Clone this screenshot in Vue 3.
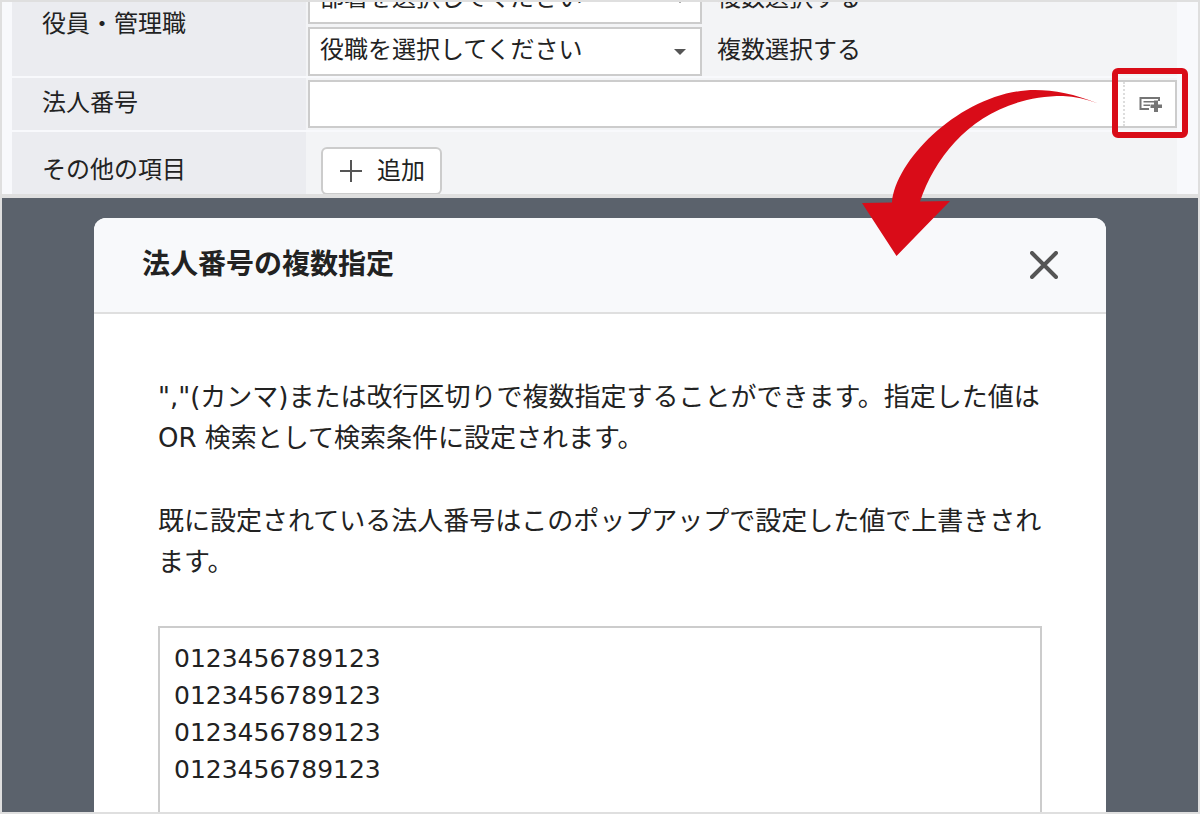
<script setup>
import { ref } from 'vue'

const department = ref('')
const position = ref('')
const corporateNumber = ref('')
const numbers = ref(Array(4).fill('0123456789123').join('\n'))
</script>

<template>
  <main class="frame">
    <form class="conditions" @submit.prevent>
      <div class="row">
        <label class="name" for="department">役員・管理職</label>
        <div class="value stack">
          <div class="line">
            <span class="picker">
              <select id="department" v-model="department">
                <option value="">部署を選択してください</option>
              </select>
              <svg class="caret" width="12" height="6" viewBox="0 0 12 6" aria-hidden="true"><path d="M0 0H12L6 6Z" /></svg>
            </span>
            <button type="button" class="multi">複数選択する</button>
          </div>
          <div class="line">
            <span class="picker">
              <select v-model="position" aria-label="役職">
                <option value="">役職を選択してください</option>
              </select>
              <svg class="caret" width="12" height="6" viewBox="0 0 12 6" aria-hidden="true"><path d="M0 0H12L6 6Z" /></svg>
            </span>
            <button type="button" class="multi">複数選択する</button>
          </div>
        </div>
      </div>

      <div class="row">
        <label class="name" for="corporate">法人番号</label>
        <div class="value single">
          <div class="combo">
            <input id="corporate" v-model="corporateNumber" type="text" />
            <button type="button" class="open" aria-label="法人番号の複数指定">
              <svg width="24" height="16" viewBox="0 0 24 16" aria-hidden="true">
                <path d="M10 13H1.500V2H20V5" fill="none" stroke="#757575" stroke-width="2" />
                <path d="M4.500 5.800H15.500M4.500 9.300H11" fill="none" stroke="#757575" stroke-width="1.6" />
                <path d="M15 4.500H19V8.500H23V12H19V16H15V12H11.500V8.500H15Z" fill="#757575" />
              </svg>
            </button>
          </div>
        </div>
      </div>

      <div class="row last">
        <label class="name" for="add">その他の項目</label>
        <div class="value extra">
          <button id="add" type="button" class="add">
            <svg width="24" height="24" viewBox="0 0 24 24" aria-hidden="true">
              <path d="M12 1V23M1 12H23" fill="none" stroke="#555" stroke-width="2" />
            </svg>
            <span>追加</span>
          </button>
        </div>
      </div>
    </form>

    <div class="overlay">
      <section class="dialog" role="dialog" aria-labelledby="dialog-title">
        <header class="head">
          <h2 id="dialog-title">法人番号の複数指定</h2>
          <button type="button" class="close" aria-label="閉じる">
            <svg width="28" height="28" viewBox="0 0 28 28" aria-hidden="true">
              <path d="M2 2L26 26M26 2L2 26" fill="none" stroke="#555" stroke-width="4" stroke-linecap="round" />
            </svg>
          </button>
        </header>
        <div class="body">
          <p>","(カンマ)または改行区切りで複数指定することができます。指定した値は<br />OR 検索として検索条件に設定されます。</p>
          <p>既に設定されている法人番号はこのポップアップで設定した値で上書きされます。</p>
          <textarea v-model="numbers" aria-label="法人番号" rows="8"></textarea>
        </div>
      </section>
    </div>

    <div class="highlight" aria-hidden="true"></div>
    <svg class="arrow" width="240" height="170" viewBox="860 88 240 170" aria-hidden="true">
      <path
        d="M1098 103.500C1075 94 1054 90 1035 90C966 90 896 157 892 202.500L862 203L896.500 256L950 201L920 201.500C938 148 985 96 1063 96C1075 96.500 1086 99 1098 103.500Z"
        fill="#d90c18"
      />
    </svg>
  </main>
</template>

<style>
body {
  margin: 0;
}
</style>

<style scoped>
.frame {
  position: relative;
  box-sizing: border-box;
  height: 100vh;
  display: flex;
  flex-direction: column;
  overflow: hidden;
  border: 2px solid #dfdfdf;
  background: #f8f9fc;
  color: #222;
  font-family: "DejaVu Sans", "Noto Sans CJK JP", sans-serif;
  font-size: 24px;
}

button,
input,
select,
textarea {
  box-sizing: border-box;
  margin: 0;
  padding: 0;
  border: 0;
  border-radius: 0;
  background: none;
  color: inherit;
  font: inherit;
}

svg {
  display: block;
}

.conditions {
  flex: none;
  display: flex;
  flex-direction: column;
  justify-content: flex-end;
  gap: 2px;
  height: 192px;
  padding: 0 21px 0 10px;
  overflow: hidden;
  border-bottom: 4px solid #dfdfdf;
}

.row {
  flex: none;
  display: grid;
  grid-template-columns: 294px 1fr;
}

.last {
  margin-bottom: -16px;
}

.name {
  display: flex;
  align-items: center;
  padding: 0 30px 8px;
  background: #ebecf0;
}

.value {
  background: #f3f4f6;
  padding-left: 2px;
}

.stack {
  display: flex;
  flex-direction: column;
  gap: 3px;
}

.line {
  display: flex;
  align-items: center;
  gap: 15px;
}

.picker {
  position: relative;
  width: 394px;
}

.picker select {
  display: block;
  width: 100%;
  height: 49px;
  padding: 0 32px 4px 10px;
  border: 2px solid #ccc;
  background: #fff;
  appearance: none;
}

.caret {
  position: absolute;
  right: 16px;
  top: 22px;
  fill: #555;
  pointer-events: none;
}

.multi {
  padding-bottom: 8px;
}

.single {
  padding-top: 2px;
  padding-bottom: 2px;
}

.combo {
  display: flex;
  height: 48px;
  box-sizing: border-box;
  border: 2px solid #ccc;
  background: #fff;
}

.combo input {
  flex: 1;
  padding: 0 10px;
}

.open {
  width: 52px;
  padding-left: 14px;
  border-left: 2px dotted #ddd;
}

.extra {
  padding: 15px;
}

.add {
  display: flex;
  align-items: center;
  gap: 14px;
  height: 48px;
  padding: 0 15px 0 16px;
  border: 2px solid #ccc;
  border-radius: 6px;
  background: #fff;
}

.add span {
  padding-bottom: 6px;
}

.overlay {
  flex: 1;
  min-height: 0;
  padding: 20px 92px 0;
  overflow: hidden;
  background: #5b626c;
}

.dialog {
  overflow: hidden;
  border-radius: 12px 12px 0 0;
  background: #fff;
}

.head {
  display: flex;
  align-items: center;
  justify-content: space-between;
  height: 94px;
  padding: 0 48px;
  border-bottom: 2px solid #dfdfdf;
  background: #f8f9fb;
}

.head h2 {
  margin: 0;
  padding-bottom: 6px;
  font-size: 28px;
  font-weight: 700;
}

.body {
  padding: 63px 64px 64px;
}

.body p {
  margin: 0 -2px 42px 0;
  font-size: 26px;
  line-height: 41px;
}

.body textarea {
  display: block;
  width: 100%;
  margin-top: 43px;
  padding: 12px 14px;
  border: 2px solid #ccc;
  font-size: 25px;
  line-height: 37px;
  resize: none;
}

.highlight {
  position: absolute;
  top: 66px;
  right: 10px;
  box-sizing: border-box;
  width: 76px;
  height: 70px;
  border: 6px solid #d90c18;
  border-radius: 6px;
  pointer-events: none;
}

.arrow {
  position: absolute;
  top: 86px;
  right: 98px;
  pointer-events: none;
}
</style>
